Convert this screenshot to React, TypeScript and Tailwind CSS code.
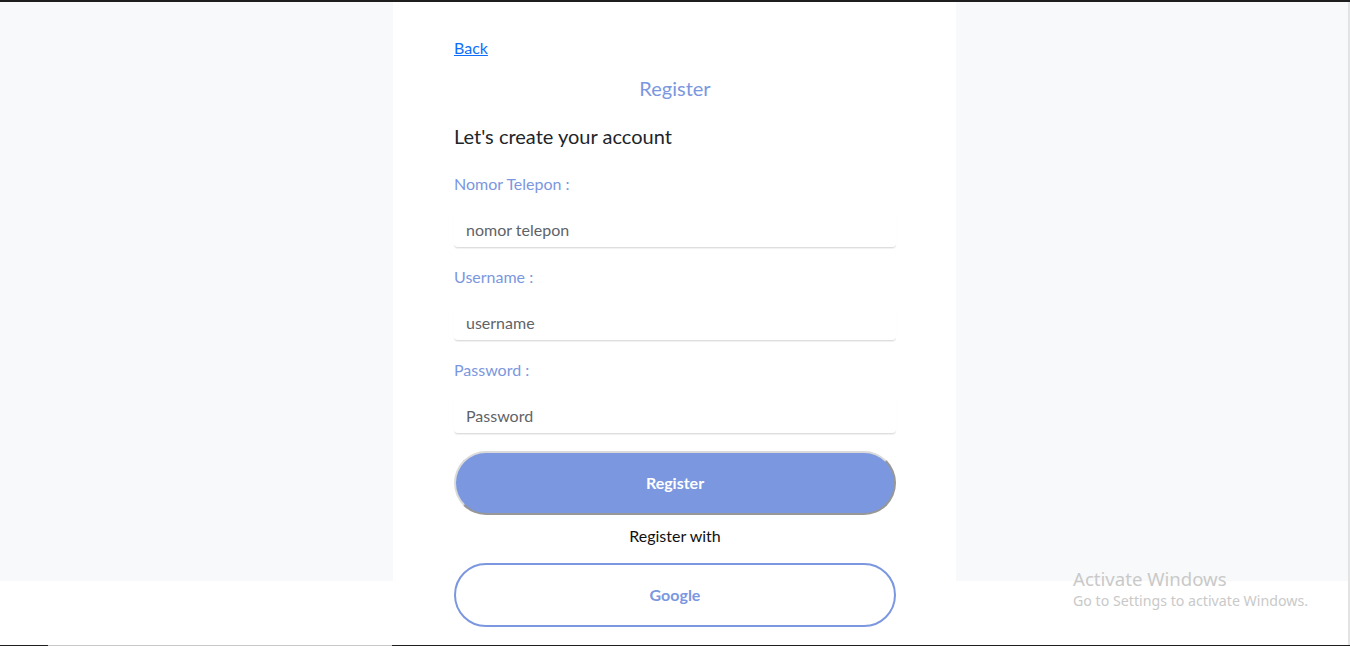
import React from "react";

export default function App() {
  const font = { fontFamily: "Lato, 'Noto Sans', sans-serif" };
  return (
    <div className="relative w-[1350px] h-[646px] overflow-hidden bg-white flex flex-col" style={font}>
      <div className="h-[2px] bg-[#1e1e1e] shrink-0" />
      <div className="flex flex-1 min-h-0">
        <div className="w-[393px] shrink-0 h-[579px] bg-[#f8f9fa]" />
        <div className="w-[563px] shrink-0 bg-white pl-[61px] pr-[60px] pt-[34px] flex flex-col">
          <a href="#" className="h-[24px] leading-[24px] text-[16px] text-[#0d6efd] underline self-start">Back</a>
          <div className="mt-[13px] h-[30px] leading-[30px] text-[20px] text-[#7b97df] text-center">Register</div>
          <div className="mt-[18px] h-[30px] leading-[30px] text-[20px] text-[#212529]">Let's create your account</div>

          {[
            { label: "Nomor Telepon :", ph: "nomor telepon", mt: "mt-[21px]" },
            { label: "Username :", ph: "username", mt: "mt-[17px]" },
            { label: "Password :", ph: "Password", mt: "mt-[17px]" },
          ].map((f, i) => (
            <div key={i} className={`${f.mt} flex flex-col`}>
              <label className="h-[24px] leading-[24px] text-[16px] text-[#7b97df]">{f.label}</label>
              <div className="mt-[15px] h-[37px] pt-[1px] flex items-center px-[12px] border-b border-[#dedede] rounded-[4px] shadow-[0_1px_1px_rgba(0,0,0,0.06)] text-[16px] text-[#5f6368]">
                {f.ph}
              </div>
            </div>
          ))}

          <button className="mt-[17px] h-[64px] w-full rounded-full bg-[#7b97df] text-white text-[16px] font-bold border-2 border-solid border-t-[#dadada] border-l-[#dadada] border-r-[#979797] border-b-[#979797]">
            Register
          </button>
          <div className="mt-[9px] h-[24px] leading-[24px] text-[16px] text-[#111] text-center">Register with</div>
          <button className="mt-[15px] h-[64px] w-full rounded-full bg-white border-2 border-[#7b97df] text-[#7b97df] text-[16px] font-bold">
            Google
          </button>
        </div>
        <div className="flex-1 h-[579px] bg-[#f8f9fa]" />
      </div>
      <div className="h-[1px] shrink-0 flex">
        <div className="w-[48px] bg-[#1e1e1e]" />
        <div className="w-[344px] bg-[#c8c8c8]" />
        <div className="flex-1 bg-[#1e1e1e]" />
      </div>
      <div className="absolute right-0 top-[2px] bottom-[1px] w-[2px] bg-[#e3e3e3]" />
      <div className="absolute left-[1073px] top-[567px] text-[#c9c9c9]" style={{ fontFamily: "'Noto Sans', 'Open Sans', sans-serif" }}>
        <div className="text-[18.6px] leading-[24px]">Activate Windows</div>
        <div className="text-[14.2px] leading-[20px]">Go to Settings to activate Windows.</div>
      </div>
    </div>
  );
}
